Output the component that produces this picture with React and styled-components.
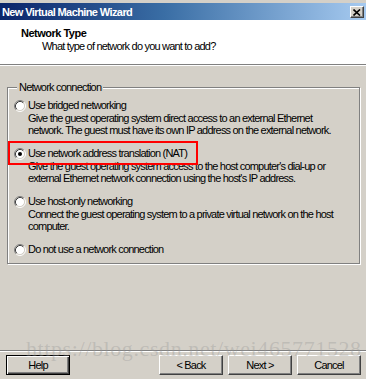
import React from "react";
import styled, { createGlobalStyle } from "styled-components";

const GlobalStyle = createGlobalStyle`
  html, body {
    margin: 0;
    padding: 0;
    background: #d4d0c8;
  }
  body {
    font-family: "Liberation Sans", Arial, sans-serif;
    font-size: 11px;
    letter-spacing: -0.8px;
    color: #000;
  }
`;

const Window = styled.div`
  position: relative;
  width: 366px;
  height: 379px;
  box-sizing: border-box;
  padding-top: 3px;
  display: flex;
  flex-direction: column;
  background: #d4d0c8;
  overflow: hidden;
`;

const TitleBar = styled.div`
  height: 17px;
  display: flex;
  align-items: center;
  justify-content: space-between;
  padding: 0 2px 0 2px;
  background: linear-gradient(to right, #0a246a 0%, #3a6ea5 45%, #a6caf0 100%);
`;

const TitleText = styled.span`
  color: #fff;
  font-weight: bold;
  letter-spacing: -0.6px;
  line-height: 13px;
  padding-top: 2px;
`;

const CloseButton = styled.div`
  width: 14px;
  height: 12px;
  box-sizing: border-box;
  display: flex;
  align-items: center;
  justify-content: center;
  background: #d4d0c8;
  border: 1px solid;
  border-color: #fff #404040 #404040 #fff;
  box-shadow: inset -1px -1px #808080;
  margin-top: 1px;
`;

const Header = styled.div`
  height: 44px;
  box-sizing: border-box;
  background: #fff;
  padding: 7px 0 0 21px;
`;

const HeaderTitle = styled.div`
  font-weight: bold;
  letter-spacing: -0.5px;
  line-height: 13px;
`;

const HeaderSub = styled.div`
  line-height: 13px;
  padding-left: 21px;
`;

const Separator = styled.div`
  height: 1px;
  background: #808080;
  border-bottom: 1px solid #fff;
`;

const Body = styled.div`
  flex: 1;
  padding: 0 6px 0 7px;
`;

const Group = styled.fieldset`
  margin: 15px 0 0 0;
  padding: 5px 6px 7px 6px;
  width: 353px;
  box-sizing: border-box;
  border: 1px solid #808080;
  box-shadow: inset 1px 1px #fff, 1px 1px #fff;
  display: flex;
  flex-direction: column;
  gap: 11px;
`;

const Legend = styled.legend`
  margin-left: 3px;
  padding: 0 2px;
  line-height: 13px;
  background: #d4d0c8;
`;

const Option = styled.div`
  position: relative;
`;

const OptionRow = styled.div`
  display: flex;
  align-items: center;
  gap: 2px;
  height: 13px;
  line-height: 13px;
`;

const Description = styled.div`
  padding-left: 14px;
  line-height: 12px;
`;

const Highlight = styled.div`
  position: absolute;
  left: -6px;
  top: -6px;
  width: 190px;
  height: 24px;
  box-sizing: border-box;
  border: 2px solid #ff0000;
  pointer-events: none;
`;

const Footer = styled.div`
  display: flex;
  align-items: center;
  padding: 3px 5px 4px 6px;
`;

const Button = styled.div`
  width: 64px;
  height: 20px;
  box-sizing: border-box;
  display: flex;
  align-items: center;
  justify-content: center;
  margin-left: ${(p) => p.$gap || 0}px;
  border: 1px solid;
  border-color: ${(p) => (p.$default ? "#000" : "#fff #404040 #404040 #fff")};
  box-shadow: ${(p) =>
    p.$default
      ? "inset 1px 1px #fff, inset -1px -1px #404040, inset -2px -2px #808080"
      : "inset -1px -1px #808080"};
  background: #d4d0c8;
`;

const Spacer = styled.div`
  flex: 1;
`;

const Watermark = styled.div`
  position: absolute;
  left: 26px;
  top: 336px;
  font-family: "Liberation Serif", "Times New Roman", serif;
  font-size: 22px;
  letter-spacing: 0.6px;
  color: rgba(150, 150, 150, 0.35);
  pointer-events: none;
  white-space: nowrap;
`;

function Radio({ checked }) {
  return (
    <svg width="12" height="12" viewBox="0 0 12 12">
      <circle cx="6" cy="6" r="4.5" fill="#fff" />
      <path d="M2.11 9.89 A5.5 5.5 0 0 1 9.89 2.11" fill="none" stroke="#808080" />
      <path d="M9.89 2.11 A5.5 5.5 0 0 1 2.11 9.89" fill="none" stroke="#fff" />
      <path d="M2.82 9.18 A4.5 4.5 0 0 1 9.18 2.82" fill="none" stroke="#404040" />
      <path d="M9.18 2.82 A4.5 4.5 0 0 1 2.82 9.18" fill="none" stroke="#d4d0c8" />
      {checked && <circle cx="6" cy="6" r="2" fill="#000" />}
    </svg>
  );
}

const options = [
  {
    label: "Use bridged networking",
    desc: [
      "Give the guest operating system direct access to an external Ethernet",
      "network. The guest must have its own IP address on the external network.",
    ],
  },
  {
    label: "Use network address translation (NAT)",
    desc: [
      "Give the guest operating system access to the host computer's dial-up or",
      "external Ethernet network connection using the host's IP address.",
    ],
    checked: true,
  },
  {
    label: "Use host-only networking",
    desc: [
      "Connect the guest operating system to a private virtual network on the host",
      "computer.",
    ],
  },
  { label: "Do not use a network connection", desc: [] },
];

export default function App() {
  return (
    <>
      <GlobalStyle />
      <Window>
        <TitleBar>
          <TitleText>New Virtual Machine Wizard</TitleText>
          <CloseButton>
            <svg width="8" height="7" viewBox="0 0 8 7">
              <path d="M0.5 0.5 L7 6.5 M7 0.5 L0.5 6.5" stroke="#000" strokeWidth="1.6" />
            </svg>
          </CloseButton>
        </TitleBar>
        <Header>
          <HeaderTitle>Network Type</HeaderTitle>
          <HeaderSub>What type of network do you want to add?</HeaderSub>
        </Header>
        <Separator />
        <Body>
          <Group>
            <Legend>Network connection</Legend>
            {options.map((o) => (
              <Option key={o.label}>
                <OptionRow>
                  <Radio checked={o.checked} />
                  <span>{o.label}</span>
                </OptionRow>
                {o.desc.length > 0 && (
                  <Description>
                    {o.desc.map((line) => (
                      <div key={line}>{line}</div>
                    ))}
                  </Description>
                )}
                {o.checked && <Highlight />}
              </Option>
            ))}
          </Group>
        </Body>
        <Separator />
        <Footer>
          <Button $default>Help</Button>
          <Spacer />
          <Button>&lt; Back</Button>
          <Button $gap={5}>Next &gt;</Button>
          <Button $gap={5}>Cancel</Button>
        </Footer>
        <Watermark>https://blog.csdn.net/wei465771528</Watermark>
      </Window>
    </>
  );
}
